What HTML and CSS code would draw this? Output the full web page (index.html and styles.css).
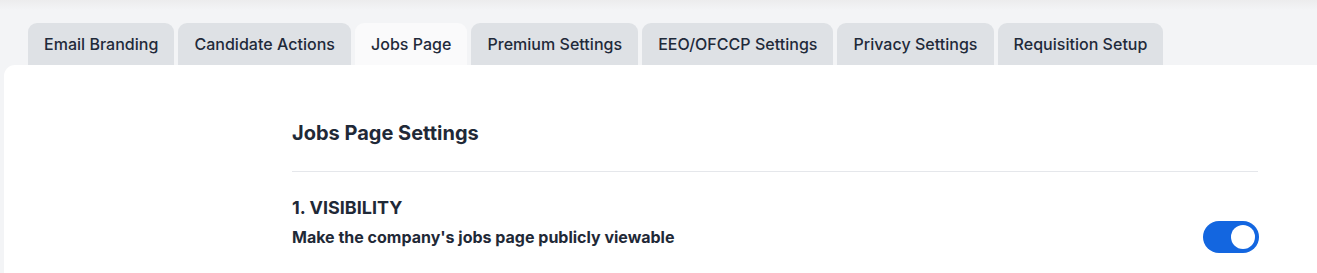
FILE: index.html
```html
<!DOCTYPE html>
<html lang="en">
<head>
    <meta charset="UTF-8">
    <meta name="viewport" content="width=device-width, initial-scale=1.0">
    <title>Jobs Page Settings</title>
    <link rel="stylesheet" href="styles.css">
</head>
<body>
    <div class="tabs">
        <div class="tab">Email Branding</div>
        <div class="tab">Candidate Actions</div>
        <div class="tab active">Jobs Page</div>
        <div class="tab">Premium Settings</div>
        <div class="tab">EEO/OFCCP Settings</div>
        <div class="tab">Privacy Settings</div>
        <div class="tab">Requisition Setup</div>
    </div>
    <div class="panel">
        <div class="content">
            <h2>Jobs Page Settings</h2>
            <div class="section">
                <h3>1. VISIBILITY</h3>
                <div class="setting-row">
                    <p>Make the company's jobs page publicly viewable</p>
                    <div class="toggle on"><span class="knob"></span></div>
                </div>
            </div>
        </div>
    </div>
</body>
</html>
```
FILE: styles.css
```css
body {
    font-family: Inter, "Noto Sans", sans-serif;
    background: linear-gradient(#ececed 0px, #f3f4f6 10px);
    margin: 0;
    color: #1f2937;
    height: 273px;
    overflow: hidden;
}
.tabs {
    display: flex;
    gap: 4px;
    padding: 23px 0 0 28px;
}
.tab {
    background-color: #dee1e5;
    border-radius: 9px 9px 0 0;
    height: 42px;
    padding: 0 16px;
    display: flex;
    align-items: center;
    font-size: 16px;
    font-weight: 500;
    letter-spacing: 0.025px;
    color: #1f2a3a;
}
.tab.active {
    background-color: #fafafb;
}
.panel {
    background: white;
    margin-left: 4px;
    border-radius: 11px 0 0 0;
    height: 208px;
}
.content {
    margin-left: 288px;
    width: 966px;
    padding-top: 56px;
}
h2 {
    font-size: 20px;
    font-weight: 700;
    margin: 0;
    padding-bottom: 26px;
    border-bottom: 1px solid #e5e7eb;
    line-height: 24px;
}
.section {
    padding-top: 25px;
}
h3 {
    font-size: 18px;
    font-weight: 700;
    margin: 0 0 2px;
    line-height: 22px;
}
.setting-row {
    display: flex;
    align-items: center;
    justify-content: space-between;
}
.setting-row p {
    font-size: 16px;
    font-weight: 700;
    margin: 0;
    line-height: 20px;
}
.toggle {
    width: 56px;
    height: 32px;
    border-radius: 16px;
    background: #ccd1d8;
    display: flex;
    align-items: center;
    padding: 0 4px;
    box-sizing: border-box;
    margin-right: -1px;
}
.toggle.on {
    background: #1366e0;
    justify-content: flex-end;
}
.knob {
    width: 24px;
    height: 24px;
    border-radius: 50%;
    background: white;
}
```
